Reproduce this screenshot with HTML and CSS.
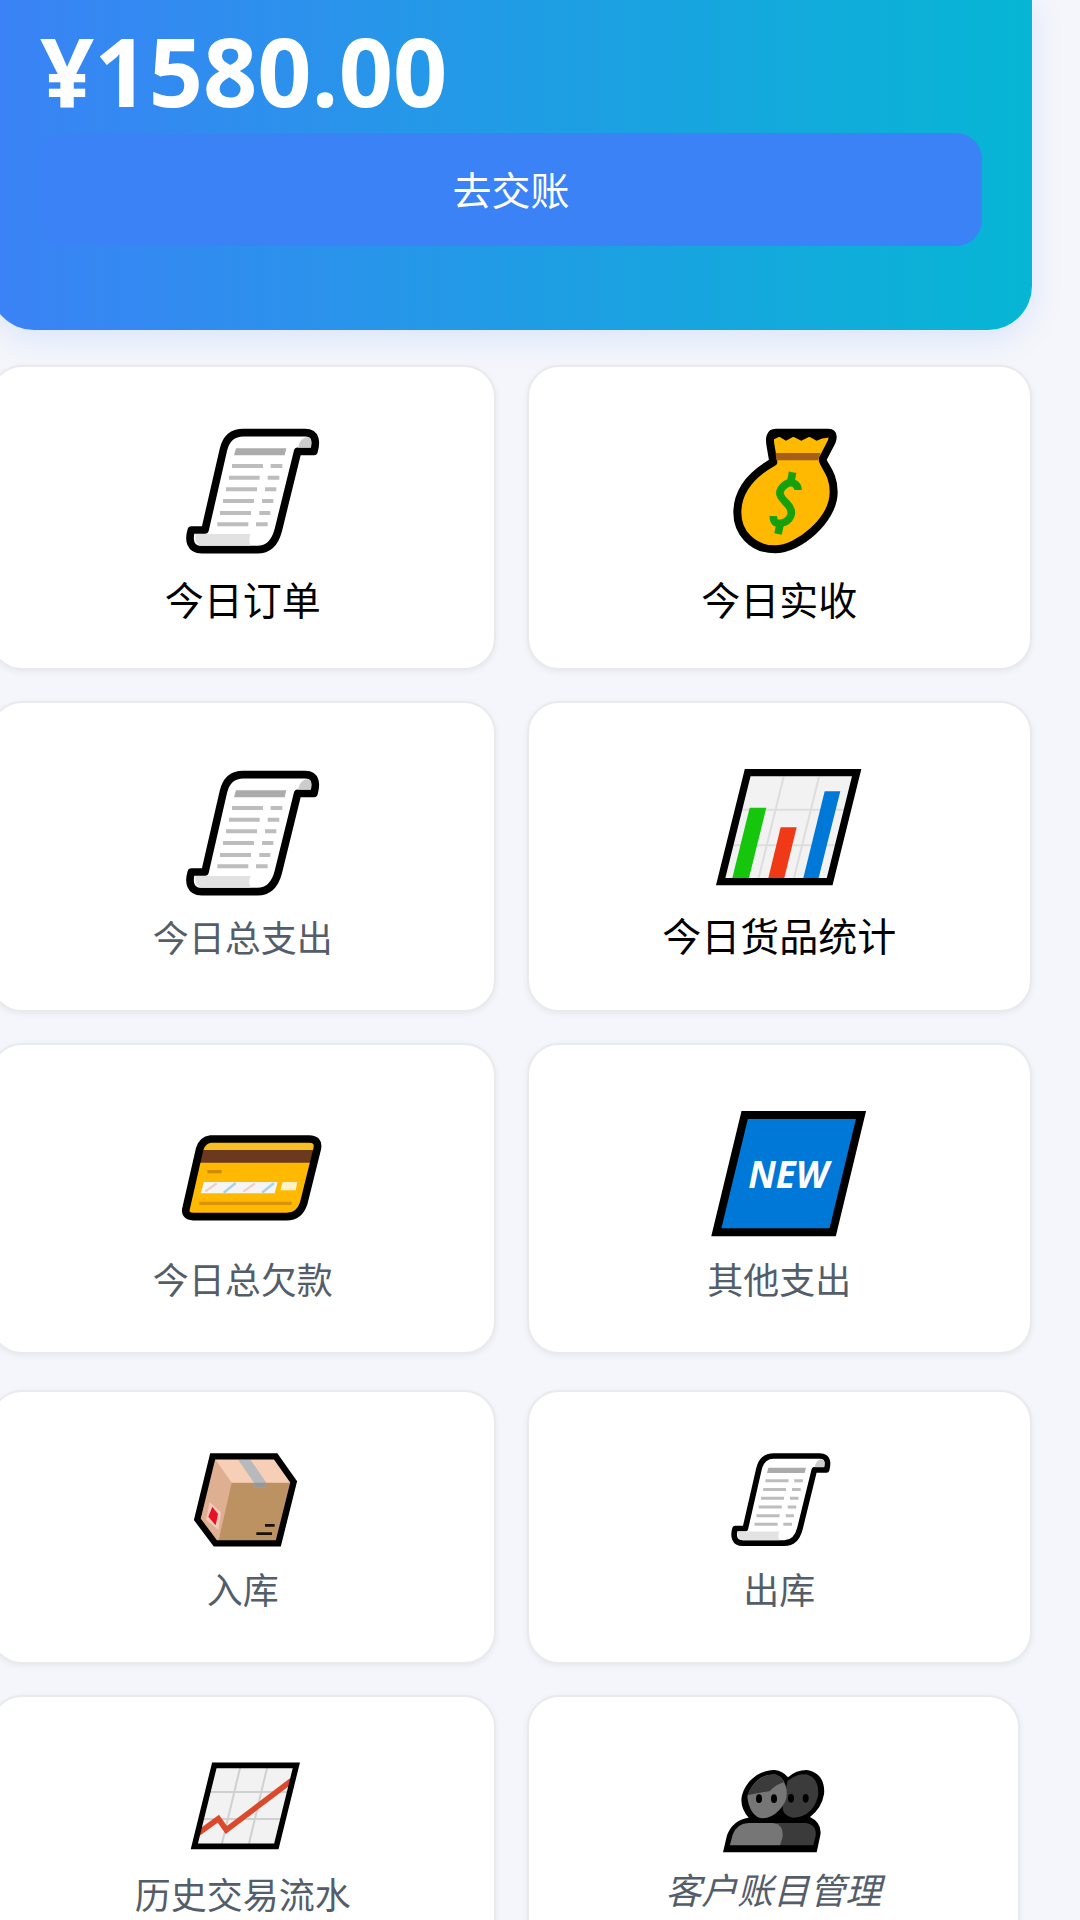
FILE: index.html
```html
<!DOCTYPE html>
<html lang="zh-CN">
<head>
    <meta charset="UTF-8">
    <meta name="viewport" content="width=device-width, initial-scale=1.0">
    <title>今日交账</title>
    <link rel="stylesheet" href="styles.css">
</head>
<body>

    <!-- 图标：小票，多处使用 -->
    <svg class="defs" width="0" height="0" aria-hidden="true">
        <defs>
            <g id="scroll">
                <path d="M165 390L220 150Q232 98 280 98H465C500 98 499 128 492 154H443L385 390Q370 449 322 449H155C120 449 115 420 124 390Z" fill="#fff" stroke="#000" stroke-width="23" stroke-linejoin="round"/>
                <path d="M444 143Q450 112 475 111Q488 115 482 143Z" fill="#ccc"/>
                <path d="M136 402H302Q294 420 302 437H155Q132 434 136 402Z" fill="#e2e2e2"/>
                <path d="M258 145H409L404 166H252Z" fill="#ababab"/>
                <path d="M246 198H339M362 198H397M237 233H329M353 233H388M228 268H321M345 268H379M219 303H312M336 303H370M210 339H303M328 339H361M202 373H295M318 373H353" fill="none" stroke="#bdbdbd" stroke-width="12"/>
            </g>
        </defs>
    </svg>

    <main class="page">
        <section class="banner">
            <div class="amount">¥1580.00</div>
            <button type="button" class="pay-btn">去交账</button>
        </section>

        <nav class="grid">
            <a class="card" href="#">
                <svg class="icon" viewBox="39 66 480 420" aria-hidden="true"><use href="#scroll"/></svg>
                <span class="label">今日订单</span>
            </a>
            <a class="card" href="#">
                <svg class="icon" viewBox="57 66 480 420" aria-hidden="true">
                    <path d="M288 98H445C462 98 461 116 450 135L428 177C427 194 462 218 461 278C460 360 355 448 285 448C215 448 172 395 172 338C172 260 232 213 280 186L273 145C266 112 271 98 288 98Z" fill="#ffb900" stroke="#000" stroke-width="24" stroke-linejoin="round"/>
                    <path d="M280 98H448L446 113Q428 112 410 122L388 110L364 122L340 110L318 122L298 110L282 118Z" fill="#000"/>
                    <path d="M287 159H422L413 181H289Z" fill="#a65f1b"/>
                    <path d="M354 270C354 253 335 240 317 253C287 276 301 291 321 311C347 337 330 365 302 370C285 371 280 364 280 348M338 217L332 246M301 370L294 402" fill="none" stroke="#16a10c" stroke-width="23"/>
                </svg>
                <span class="label">今日实收</span>
            </a>
            <a class="card" href="#">
                <svg class="icon" viewBox="39 48 480 420" aria-hidden="true"><use href="#scroll"/></svg>
                <span class="label muted">今日总支出</span>
            </a>
            <a class="card" href="#">
                <svg class="icon" viewBox="117 54 480 420" aria-hidden="true">
                    <path d="M263 98H590L509 425H182Z" fill="#f2f2f2"/>
                    <path d="M371 110L296 414M477 110L402 414M238 209H562M211 316H535" fill="none" stroke="#ddd" stroke-width="6"/>
                    <path d="M269 203H319L266 418H216Z" fill="#16c60c"/>
                    <path d="M362 262H410L372 418H324Z" fill="#f03a17"/>
                    <path d="M494 154H541L475 418H429Z" fill="#0078d7"/>
                    <path d="M263 98H590L509 425H182Z" fill="none" stroke="#000" stroke-width="22"/>
                </svg>
                <span class="label">今日货品统计</span>
            </a>
            <a class="card" href="#">
                <svg class="icon" viewBox="69 0 480 420" aria-hidden="true">
                    <path d="M212 117H507Q537 117 532 145L491 310Q478 350 440 350H160Q131 348 139 322L179 147Q187 120 212 117Z" fill="#ffb900"/>
                    <path d="M205 130H515L518 151H195Z" fill="#f6bd27"/>
                    <path d="M184 150H524L514 188H175Z" fill="#6b3a1e"/>
                    <path d="M202 215H245" fill="none" stroke="#cf8c0c" stroke-width="10"/>
                    <path d="M192 246H413L404 280H182Z" fill="#f5f5f5"/>
                    <path d="M195 275L230 250M310 275L345 250" fill="none" stroke="#f0cfc0" stroke-width="7"/>
                    <path d="M251 278L287 249M366 278L402 249" fill="none" stroke="#a9d3e6" stroke-width="8"/>
                    <path d="M428 246H472L467 271H421Z" fill="#fff2c7"/>
                    <path d="M178 310H455" fill="none" stroke="#dc930b" stroke-width="10"/>
                    <path d="M212 117H507Q537 117 532 145L491 310Q478 350 440 350H160Q131 348 139 322L179 147Q187 120 212 117Z" fill="none" stroke="#000" stroke-width="23"/>
                </svg>
                <span class="label muted">今日总欠款</span>
            </a>
            <a class="card" href="#">
                <svg class="icon" viewBox="57 60 480 420" aria-hidden="true">
                    <path d="M194 105H543L458 457H109Z" fill="#0078d7" stroke="#000" stroke-width="24"/>
                    <text class="icon-text" x="325" y="324">NEW</text>
                </svg>
                <span class="label muted">其他支出</span>
            </a>
        </nav>

        <nav class="grid small">
            <a class="card" href="#">
                <svg class="icon" viewBox="9 81 480 309" aria-hidden="true">
                    <path d="M158 109H347L401 186L355 370H166L112 298Z" fill="#bd9262"/>
                    <path d="M158 109H347L398 188H214Z" fill="#f7cfb7"/>
                    <path d="M158 109L215 188L174 370L112 298Z" fill="#dfaf91"/>
                    <path d="M235 120H272L319 188L314 203H284L282 188Z" fill="#b7b9bd"/>
                    <path d="M282 188H319L314 203H284Z" fill="#969696"/>
                    <path d="M149 246L183 277L175 330L138 299Z" fill="#f3c9bc"/>
                    <path d="M157 260L174 282L167 316L145 290Z" fill="#e81224"/>
                    <path d="M315 316H344M289 341H336" fill="none" stroke="#1a1208" stroke-width="8"/>
                    <path d="M158 109H347L401 186L355 370H166L112 298Z" fill="none" stroke="#000" stroke-width="19"/>
                </svg>
                <span class="label muted">入库</span>
            </a>
            <a class="card" href="#">
                <svg class="icon" viewBox="-3 51 480 309" aria-hidden="true"><use href="#scroll" transform="translate(13 5) scale(.745)"/></svg>
                <span class="label muted">出库</span>
            </a>
            <a class="card" href="#">
                <svg class="icon" viewBox="129 66 480 309" aria-hidden="true">
                    <path d="M283 106H529L469 349H223Z" fill="#f2f2f2"/>
                    <path d="M361 110L305 345M442 110L386 345M265 186H510M245 267H490" fill="none" stroke="#d0d0d0" stroke-width="6"/>
                    <path d="M236 309L295 266L319 300L514 152" fill="none" stroke="#dc482b" stroke-width="17"/>
                    <path d="M283 106H529L469 349H223Z" fill="none" stroke="#000" stroke-width="17"/>
                </svg>
                <span class="label muted">历史交易流水</span>
            </a>
            <a class="card card-narrow" href="#">
                <svg class="icon" viewBox="129 66 480 309" aria-hidden="true">
                    <path d="M219 367L231 316Q248 270 296 263Q268 231 276 196C288 150 331 119 374 120Q398 122 414 142Q438 120 470 120C510 125 526 158 522 193Q515 235 480 261Q517 279 511 316L500 367Z" fill="#000"/>
                    <path d="M412 154Q438 130 470 133Q506 145 505 191C498 235 469 262 428 263Q400 258 398 235Z" fill="#3b3b3b"/>
                    <path d="M292 200C306 154 338 130 378 134Q400 141 407 167Q419 209 388 240Q362 268 330 264Q298 252 292 200Z" fill="#767676"/>
                    <path d="M292 196C310 151 343 130 380 134Q395 139 402 157Q379 162 360 183Q327 188 292 196Z" fill="#3b3b3b"/>
                    <path d="M375 279H468Q501 285 497 318L489 348H380Z" fill="#3b3b3b"/>
                    <path d="M239 348L248 314Q261 280 296 279H370Q401 284 398 320L388 353H239Z" fill="#767676"/>
                    <path d="M235 350H495" fill="none" stroke="#000" stroke-width="8"/>
                    <g fill="#000">
                        <ellipse cx="327" cy="206" rx="9" ry="13"/>
                        <ellipse cx="372" cy="206" rx="9" ry="13"/>
                        <ellipse cx="423" cy="205" rx="9" ry="13"/>
                        <ellipse cx="467" cy="205" rx="9" ry="13"/>
                    </g>
                </svg>
                <span class="label muted slanted">客户账目管理</span>
            </a>
        </nav>
    </main>

</body>
</html>
```
FILE: styles.css
```css
* {
    box-sizing: border-box;
}

body {
    margin: 0;
    height: 100vh;
    overflow: hidden;
    background: #f5f6fb;
    font-family: "Open Sans", "Noto Sans CJK SC", sans-serif;
}

.defs {
    position: absolute;
}

.page {
    margin: 0 48px 0 -10px;
}

.banner {
    padding: 16px 50px 84px;
    border-radius: 0 0 44px 44px;
    background: linear-gradient(90deg, #3b82f6, #06b6d4);
    box-shadow: 0 8px 32px rgba(59, 130, 246, 0.15);
    color: #fff;
}

.amount {
    font-size: 95px;
    font-weight: bold;
    line-height: 108px;
}

.pay-btn {
    display: block;
    width: 100%;
    margin-top: 9px;
    padding: 30px;
    border: none;
    border-radius: 26px;
    background: #3b82f6;
    color: #fff;
    font-family: inherit;
    font-size: 39px;
    line-height: 53px;
    cursor: pointer;
}

.grid {
    display: grid;
    grid-template-columns: 1fr 1fr;
    gap: 31px;
    margin-top: 35px;
}

.grid.small {
    margin-top: 36px;
}

.card {
    display: flex;
    flex-direction: column;
    align-items: center;
    gap: 12px;
    padding: 55px 20px 42px;
    border: 2px solid #e8eaee;
    border-radius: 32px;
    background: #fff;
    box-shadow: 0 2px 6px rgba(0, 0, 0, 0.06);
    color: #000;
    text-decoration: none;
}

.card-narrow {
    margin-right: 12px;
}

.icon {
    width: 160px;
    height: 140px;
    overflow: visible;
}

.small .icon {
    height: 103px;
}

.icon-text {
    fill: #fff;
    font-size: 110px;
    font-style: italic;
    font-weight: bold;
    text-anchor: middle;
}

.label {
    font-size: 39px;
    line-height: 52px;
}

.label.muted {
    color: #545d6a;
    font-size: 36px;
    line-height: 58px;
}

.label.slanted {
    font-style: italic;
    line-height: 48px;
}
```
